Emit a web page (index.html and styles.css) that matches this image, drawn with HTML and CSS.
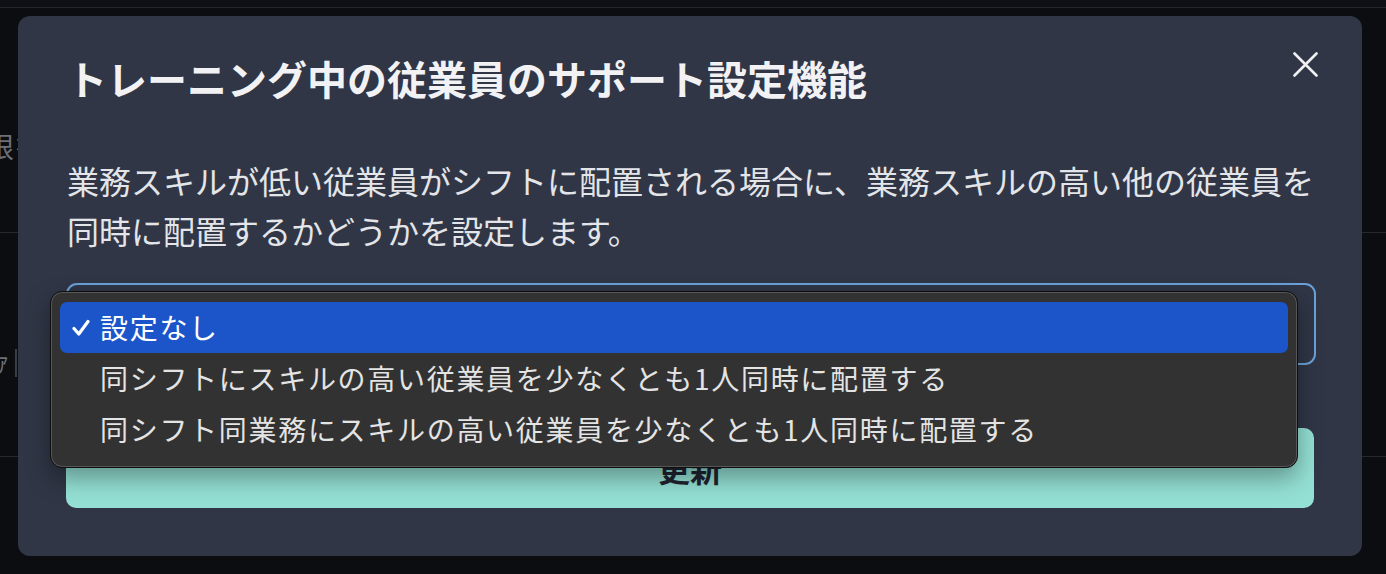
FILE: index.html
```html
<!DOCTYPE html>
<html lang="ja">
<head>
<meta charset="utf-8">
<title>トレーニング中の従業員のサポート設定機能</title>
<link rel="stylesheet" href="styles.css">
</head>
<body>
<div class="page">
  <div class="topbar"></div>
  <div class="bg-row bg-row-1"><span class="ghost">限を</span></div>
  <div class="bg-row bg-row-2"><span class="ghost ghost-small">ｧ</span><span class="ghost-bar"></span></div>
  <div class="bg-row bg-row-3"></div>
</div>

<div class="modal">
  <h1 class="modal-title">トレーニング中の従業員のサポート設定機能</h1>
  <button class="close" aria-label="閉じる">
    <svg width="25" height="25" viewBox="0 0 25 25"><path d="M1.5 1.5 L23.5 23.5 M23.5 1.5 L1.5 23.5" stroke="#f0f0f2" stroke-width="2.6" stroke-linecap="round" fill="none"/></svg>
  </button>
  <p class="modal-desc">業務スキルが低い従業員がシフトに配置される場合に、業務スキルの高い他の従業員を同時に配置するかどうかを設定します。</p>
  <div class="select-box"></div>
  <button class="submit">更新</button>

  <div class="popup">
    <div class="option selected">
      <span class="check"><svg width="18" height="18" viewBox="0 0 18 18"><path d="M2 9.5 L6.8 15 L16 2.5" stroke="#ffffff" stroke-width="3.2" stroke-linecap="round" stroke-linejoin="round" fill="none"/></svg></span>
      <span class="label">設定なし</span>
    </div>
    <div class="option">
      <span class="check"></span>
      <span class="label">同シフトにスキルの高い従業員を少なくとも1人同時に配置する</span>
    </div>
    <div class="option">
      <span class="check"></span>
      <span class="label">同シフト同業務にスキルの高い従業員を少なくとも1人同時に配置する</span>
    </div>
  </div>
</div>
</body>
</html>
```

FILE: styles.css
```css
* { box-sizing: border-box; }

html, body {
  margin: 0;
  height: 100%;
}

body {
  background: #0b0d11;
  overflow: hidden;
  font-family: "Noto Sans CJK JP", "Noto Sans", sans-serif;
}

.page {
  display: flex;
  flex-direction: column;
  height: 100%;
}

.topbar {
  height: 8px;
  background: #0e1015;
  border-bottom: 1px solid #23262c;
}

.bg-row {
  border-bottom: 1px solid #25282e;
  position: relative;
  overflow: hidden;
}

.bg-row-1 { height: 225px; padding-top: 118px; }
.bg-row-2 { height: 224px; padding-top: 108px; display: flex; align-items: flex-start; }
.bg-row-3 { flex: 1; border-bottom: none; }

.ghost {
  display: inline-block;
  margin-left: -14px;
  color: #6d7076;
  font-size: 28px;
  line-height: 40px;
}

.ghost-small {
  margin-left: -4px;
  font-size: 26px;
}

.ghost-bar {
  width: 2px;
  height: 28px;
  margin-left: 6px;
  margin-top: 8px;
  background: #3a3d44;
}

.modal {
  position: fixed;
  top: 16px;
  left: 18px;
  width: 1344px;
  height: 540px;
  background: #303646;
  border-radius: 12px;
  padding: 38px 48px 48px;
  display: flex;
  flex-direction: column;
}

.modal-title {
  margin: 0;
  color: #f2f2f4;
  font-size: 40px;
  line-height: 48px;
  font-weight: 700;
  padding-left: 1px;
  white-space: nowrap;
}

.close {
  position: absolute;
  top: 36px;
  right: 44px;
  width: 25px;
  height: 25px;
  padding: 0;
  border: none;
  background: none;
  display: flex;
}

.modal-desc {
  margin: 53px -6px 0 0;
  color: #e3e5e9;
  font-size: 32px;
  line-height: 50px;
  padding-left: 1px;
}

.select-box {
  margin-top: 28px;
  height: 82px;
  margin-right: -2px;
  border: 2px solid #6aa2d8;
  border-radius: 11px;
}

.submit {
  margin-top: 63px;
  height: 80px;
  border: none;
  border-radius: 10px;
  background: #94e0d4;
  color: #1f2430;
  font-family: inherit;
  font-size: 32px;
  font-weight: 700;
  padding: 0;
}

.popup {
  position: absolute;
  left: 32px;
  top: 275px;
  width: 1248px;
  height: 177px;
  background: #323232;
  border: 1px solid #0e0e0e;
  border-radius: 12px;
  box-shadow: inset 0 0 0 1px #575757, 0 10px 24px rgba(0, 0, 0, 0.35);
  padding: 10px 9px 12px;
  display: flex;
  flex-direction: column;
}

.option {
  height: 51px;
  display: flex;
  align-items: center;
  padding-left: 12px;
  border-radius: 7px;
  color: #e4e4e4;
  font-size: 28px;
  letter-spacing: 1.7px;
}

.option.selected {
  background: #1b55c9;
  color: #ffffff;
}

.check {
  width: 28px;
  display: flex;
  align-items: center;
}

.label {
  line-height: 51px;
}
```
